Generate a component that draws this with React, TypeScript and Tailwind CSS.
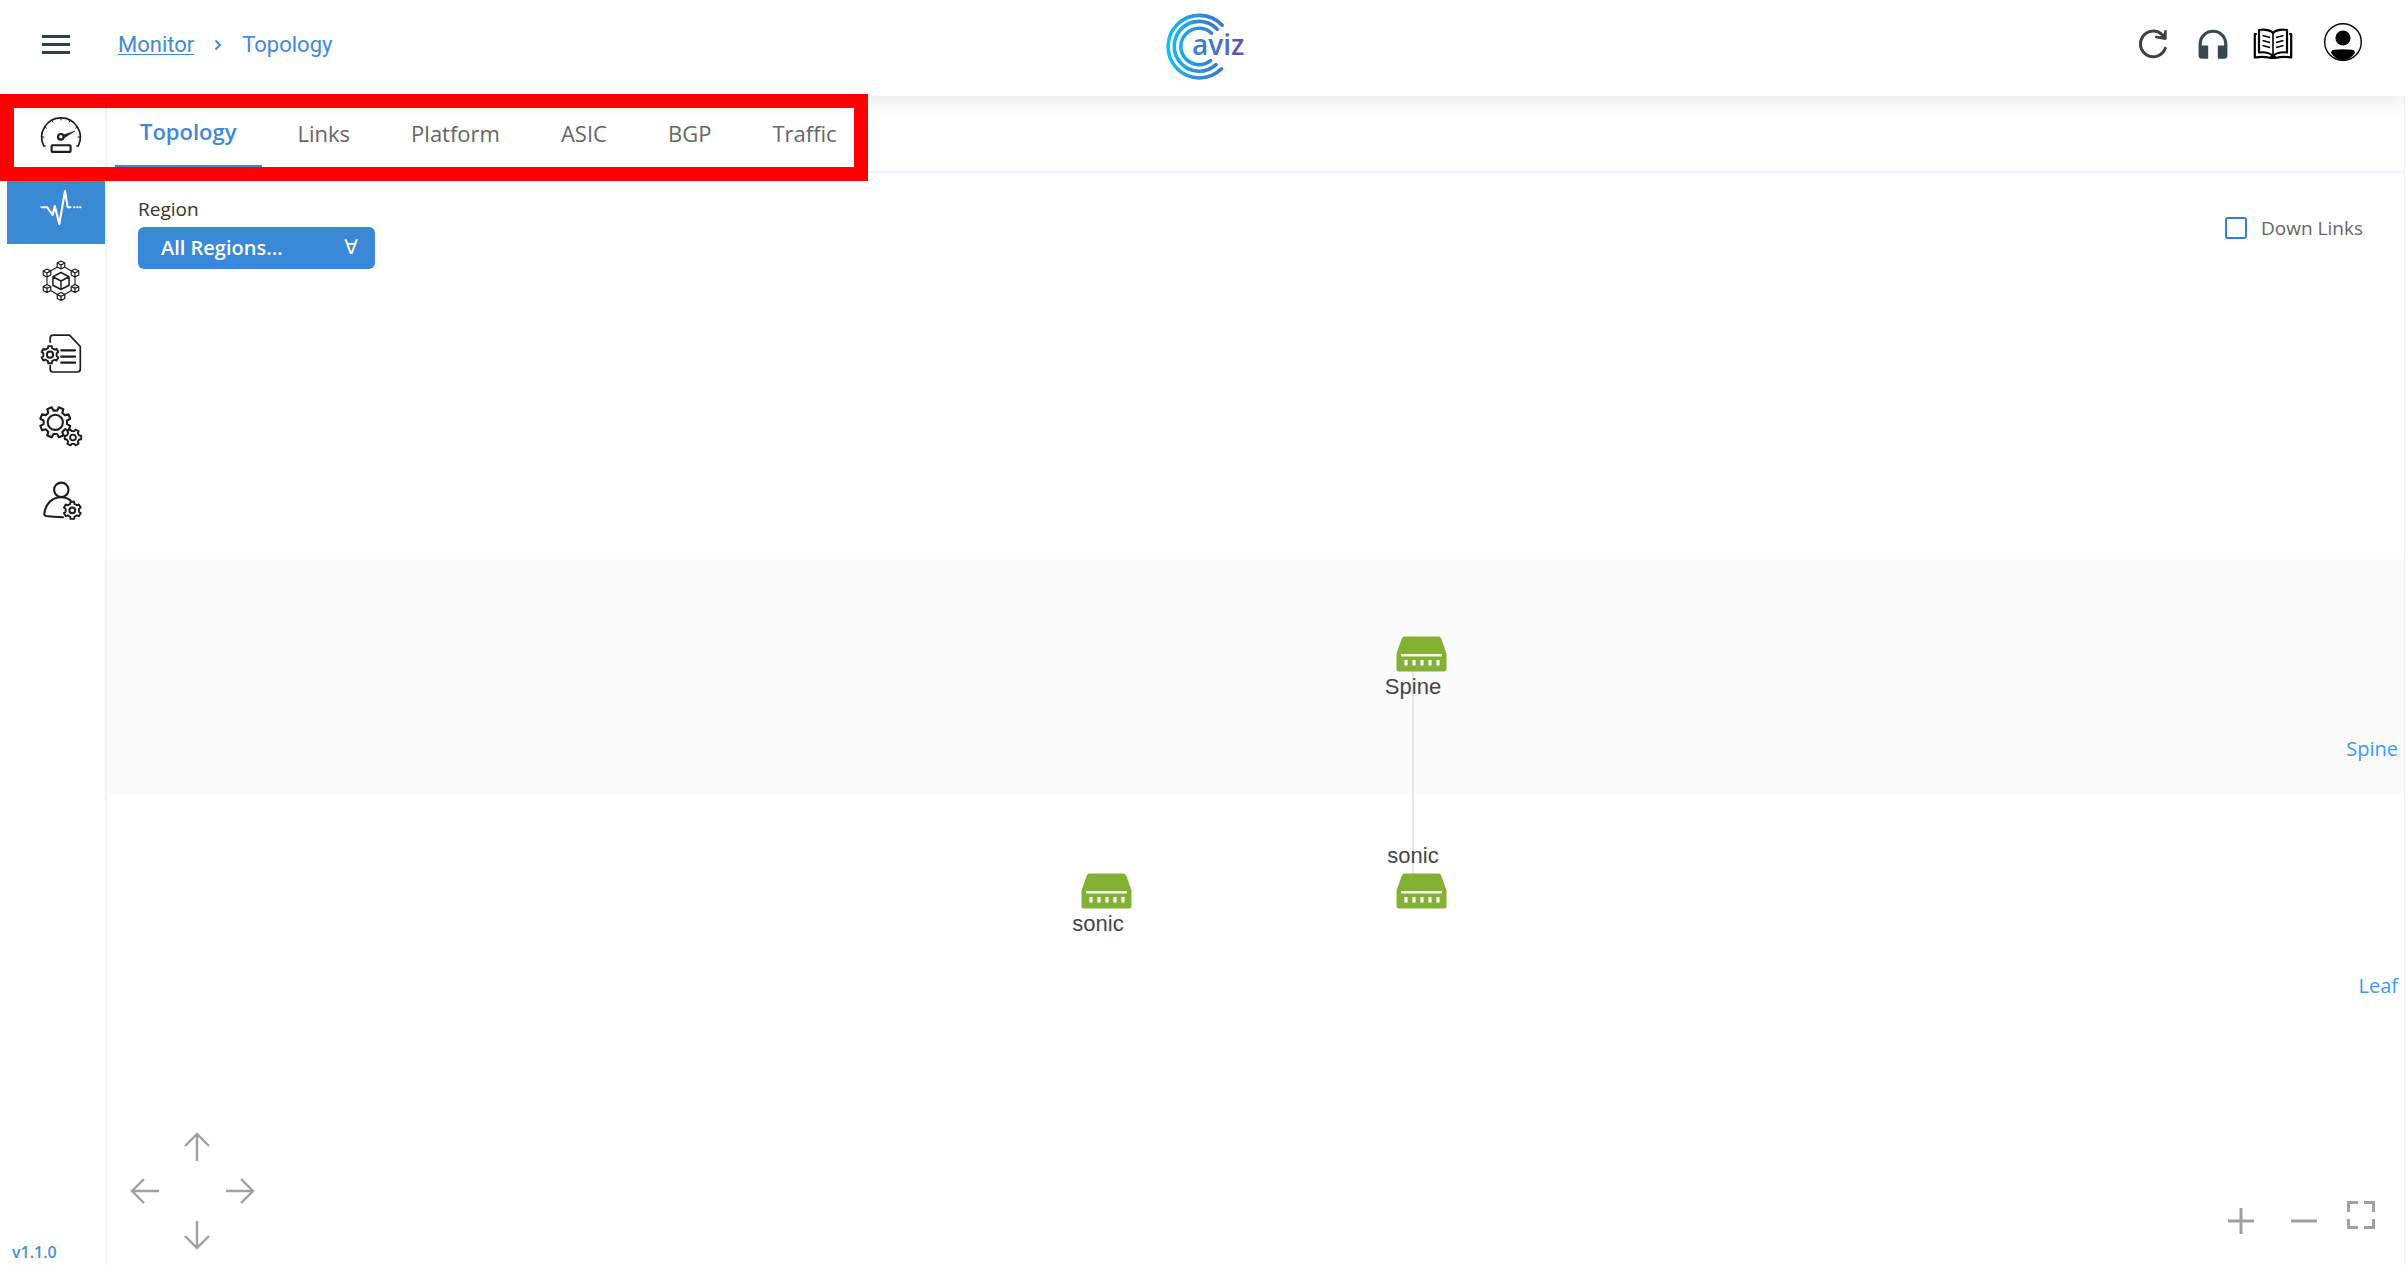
import { useState } from "react";
import { clsx } from "clsx";

const tabs = ["Topology", "Links", "Platform", "ASIC", "BGP", "Traffic"];

// Outline of a cog wheel around (cx, cy)
function gearPath(cx: number, cy: number, outer: number, teeth: number, phase = 0) {
  const inner = outer * 0.77;
  const step = (Math.PI * 2) / teeth;
  const points: string[] = [];
  for (let i = 0; i < teeth; i++) {
    const a = phase + i * step;
    [
      [-0.3, inner],
      [-0.2, outer],
      [0.2, outer],
      [0.3, inner],
    ].forEach(([offset, r]) => {
      const angle = a + offset * step;
      points.push(`${(cx + r * Math.cos(angle)).toFixed(2)} ${(cy + r * Math.sin(angle)).toFixed(2)}`);
    });
  }
  return `M${points.join("L")}Z`;
}

function cubePath(cx: number, cy: number, r: number) {
  const w = r * 0.95;
  const h = r * 0.5;
  return [
    `M${cx} ${cy - r}L${cx + w} ${cy - h}V${cy + h}L${cx} ${cy + r}L${cx - w} ${cy + h}V${cy - h}Z`,
    `M${cx - w} ${cy - h}L${cx} ${cy}L${cx + w} ${cy - h}M${cx} ${cy}V${cy + r}`,
  ].join("");
}

interface IconProps {
  children: React.ReactNode;
  size?: string;
}

function LineIcon({ children, size = "size-10" }: IconProps) {
  return (
    <svg
      viewBox="0 0 40 40"
      className={clsx(size, "overflow-visible")}
      fill="none"
      stroke="currentColor"
      strokeWidth="1.7"
      strokeLinejoin="round"
      strokeLinecap="round"
      aria-hidden="true"
    >
      {children}
    </svg>
  );
}

function GaugeIcon() {
  return (
    <LineIcon>
      <path d="M4 31H2.8A19.3 19.3 0 1 1 37.2 31H36" />
      <path d="M20 2.5V5M10.5 5L11.7 7M29.5 5L28.3 7M3.5 12L5.5 13.2M36.5 12L34.5 13.2M.8 22H3M39.2 22H37" strokeWidth="1" />
      <circle cx="19.8" cy="21.8" r="2.8" strokeWidth="2.2" />
      <path d="M22 20L34 16L23 23Z" fill="currentColor" strokeWidth=".5" />
      <rect x="10.6" y="30.3" width="19" height="6.6" rx="1" strokeWidth="2.1" />
    </LineIcon>
  );
}

function PulseIcon() {
  return (
    <LineIcon>
      <path
        d="M.5 19.3H6.2L11.7 27L13.8 18L18.3 36L24 3L26.7 19.3H29.5M33 19.3H33.4M36.2 19.3H36.6M39.2 19.3H39.6"
        strokeWidth="2.1"
      />
    </LineIcon>
  );
}

function ClusterIcon() {
  const outer = [
    [20, 4],
    [34, 12],
    [34, 27.5],
    [20, 35.5],
    [6, 27.5],
    [6, 12],
  ];
  return (
    <LineIcon>
      <path d={`M${outer.map((p) => p.join(" ")).join("L")}Z`} strokeWidth="1.1" />
      {outer.map(([x, y]) => (
        <path key={`${x}-${y}`} d={cubePath(x, y, 4)} fill="#fff" strokeWidth="1.2" />
      ))}
      <path d={cubePath(20, 20, 8.5)} fill="#fff" strokeWidth="1.5" />
    </LineIcon>
  );
}

function ConfigIcon() {
  return (
    <LineIcon>
      <path d="M9.2 8V4Q9.2 1.2 12 1.2H28.5L39.3 12.5V35Q39.3 38 36.3 38H12Q9.2 38 9.2 35V31.5" />
      <path d="M20.2 16.3H34M20.2 22.7H34M20.2 28.7H34" strokeWidth="2.3" />
      <path d={gearPath(9, 20.7, 8.8, 6, Math.PI / 6)} strokeWidth="1.9" />
      <circle cx="9" cy="20.7" r="3.1" strokeWidth="2" />
    </LineIcon>
  );
}

function SettingsIcon() {
  return (
    <LineIcon>
      <path d={gearPath(14.3, 15.3, 15.4, 8, Math.PI / 8)} strokeWidth="2.1" />
      <circle cx="14.3" cy="15.3" r="7.6" strokeWidth="2.1" />
      <path d={gearPath(32, 30.5, 8.4, 6)} fill="#fff" strokeWidth="1.9" />
      <circle cx="32" cy="30.5" r="2.9" strokeWidth="1.8" />
    </LineIcon>
  );
}

function UserSettingsIcon() {
  return (
    <LineIcon>
      <circle cx="20.3" cy="9.8" r="7.2" strokeWidth="2.1" />
      <path d="M22 37.3Q12 37 5 36Q3.2 35.6 3.3 33.5C4.5 24 11 17.2 20 17.2Q26 17.2 29.5 20.5" strokeWidth="2.1" />
      <path d={gearPath(31.3, 30.3, 8.8, 6, Math.PI / 6)} fill="#fff" strokeWidth="1.9" />
      <circle cx="31.3" cy="30.3" r="2.9" strokeWidth="2" />
    </LineIcon>
  );
}

const navItems = [
  { label: "Dashboard", icon: GaugeIcon },
  { label: "Monitor", icon: PulseIcon },
  { label: "Fabric", icon: ClusterIcon },
  { label: "Configure", icon: ConfigIcon },
  { label: "Settings", icon: SettingsIcon },
  { label: "Users", icon: UserSettingsIcon },
];

function Logo() {
  return (
    <svg viewBox="2 0 84 72" className="h-[72px] w-[84px]" role="img" aria-label="aviz">
      <defs>
        <linearGradient id="ring" gradientUnits="userSpaceOnUse" x1="7" y1="0" x2="64" y2="0">
          <stop offset="0" stopColor="#0fc3ee" />
          <stop offset=".5" stopColor="#2b95dc" />
          <stop offset="1" stopColor="#3f72c8" />
        </linearGradient>
        <linearGradient id="word" gradientUnits="userSpaceOnUse" x1="32" y1="0" x2="83" y2="0">
          <stop offset="0" stopColor="#3a86cf" />
          <stop offset=".6" stopColor="#4470c2" />
          <stop offset="1" stopColor="#6a4fb0" />
        </linearGradient>
      </defs>
      <g fill="none" stroke="url(#ring)" strokeWidth="3.6" strokeLinecap="round">
        <path d="M63.2 17.2A31.3 31.3 0 1 0 62.5 60.8" />
        <path d="M58.2 21.2A24.9 24.9 0 1 0 57 56.6" />
        <path d="M52.5 25.2A18.2 18.2 0 1 0 51.5 52.6" />
      </g>
      <text x="33" y="47" fill="url(#word)" className="font-['Open_Sans'] text-[28px] font-semibold">
        aviz
      </text>
    </svg>
  );
}

function Header() {
  return (
    <header className="relative z-10 grid h-24 grid-cols-[1fr_auto_1fr] items-center bg-white px-[42px] pb-2 shadow-[0_4px_18px_rgba(0,0,0,0.1)]">
      <div className="flex items-center font-[Roboto] text-[22px] leading-7 text-[#3f8ad8]">
        <button type="button" aria-label="Menu" className="flex w-7 flex-col gap-[5px] text-[#2f3e48]">
          <span className="h-[3px] w-full bg-current" />
          <span className="h-[3px] w-full bg-current" />
          <span className="h-[3px] w-full bg-current" />
        </button>
        <nav aria-label="Breadcrumb" className="ml-12 flex items-center gap-5 pt-0.5">
          <a href="#monitor" className="underline decoration-1 underline-offset-2">
            Monitor
          </a>
          <svg viewBox="0 0 8 12" className="h-3 w-2" fill="none" stroke="currentColor" strokeWidth="2" aria-hidden="true">
            <path d="M1.5 1.5L6 6L1.5 10.5" />
          </svg>
          <span>Topology</span>
        </nav>
      </div>
      <Logo />
      <div className="flex items-center justify-end gap-5">
        <button type="button" aria-label="Refresh" className="flex size-10 items-center justify-center text-[#404040]">
          <svg viewBox="0 0 30 30" className="size-[30px]" fill="none" stroke="currentColor" strokeWidth="3" strokeLinecap="round" aria-hidden="true">
            <path d="M27.3 19.3A12.8 12.8 0 1 1 23.6 5.2" />
            <path d="M27.4 2.2V9.6L18.2 8" strokeWidth="2.6" strokeLinejoin="round" />
            <path d="M27.2 3V9.5H20Z" fill="currentColor" stroke="none" />
          </svg>
        </button>
        <button type="button" aria-label="Support" className="flex size-10 items-center justify-center text-[#37474f]">
          <svg viewBox="0 0 30 30" className="size-[30px]" fill="currentColor" aria-hidden="true">
            <path d="M15 .7C6.9 .7 .6 7 .6 15v11.5a3.2 3.2 0 0 0 3.2 3.2h6.4V16.5H3.8V15a11.2 11.2 0 0 1 22.4 0v1.5h-6.4v13.2h6.4a3.2 3.2 0 0 0 3.2-3.2V15C29.4 7 23.1 .7 15 .7Z" />
          </svg>
        </button>
        <button type="button" aria-label="Documentation" className="flex size-10 items-center justify-center text-black">
          <svg viewBox="0 0 40 32" className="h-8 w-10" fill="none" stroke="currentColor" strokeLinejoin="round" aria-hidden="true">
            <path d="M20 4.8C16 1.8 11 1.3 6 2V24.5C11 23.8 16 24.5 20 27.8C24 24.5 29 23.8 34 24.5V2C29 1.3 24 1.8 20 4.8Z" strokeWidth="2.2" />
            <path d="M20 4.8V28" strokeWidth="1.6" />
            <path d="M3.8 6H1.8V29.5C7 28.5 12 28.5 17 29.8H23C28 28.5 33 28.5 38.2 29.5V6H36.2" strokeWidth="2.2" />
            <path d="M9.5 7.5L17 9.5M9.5 12.5L17 14.5M9.5 17.5L17 19.5M30.5 7.5L23 9.5M30.5 12.5L23 14.5M30.5 17.5L23 19.5" strokeWidth="1.7" />
            <path d="M17 28.2Q20 25.8 23 28.2Q22 31 20 31Q18 31 17 28.2Z" fill="currentColor" stroke="none" />
          </svg>
        </button>
        <button type="button" aria-label="Account" className="ml-2.5 flex size-10 items-center justify-center pb-1 text-black">
          <svg viewBox="0 0 38 38" className="size-[38px] shrink-0" fill="currentColor" aria-hidden="true">
            <circle cx="19" cy="19" r="18.3" fill="none" stroke="currentColor" strokeWidth="1.4" />
            <circle cx="19" cy="15" r="7.6" />
            <path d="M7 30Q7.3 26.7 10.5 26.7Q19 25.7 27.5 26.7Q30.7 26.7 31 30Q26 37 19 37.3Q12 37 7 30Z" />
          </svg>
        </button>
      </div>
    </header>
  );
}

function Sidebar() {
  return (
    <aside className="flex w-[107px] shrink-0 flex-col border-r-2 border-[#edf4fb] pt-0.5">
      <nav aria-label="Main" className="flex flex-col pl-[7px]">
        {navItems.map(({ label, icon: Icon }) => (
          <a
            key={label}
            href={`#${label.toLowerCase()}`}
            aria-label={label}
            className={clsx(
              "flex h-[73px] items-center justify-center pl-2.5",
              label === "Monitor" ? "bg-[#3a89d3] text-white" : "text-[#1c1c1c]"
            )}
          >
            <Icon />
          </a>
        ))}
      </nav>
      <p className="mt-auto pb-px pl-3 text-base leading-6 font-semibold text-[#4a8fd8]">v1.1.0</p>
    </aside>
  );
}

function SwitchIcon() {
  return (
    <svg viewBox="0 0 51 36" className="h-9 w-[51px] shrink-0" aria-hidden="true">
      <path d="M9 .5H42Q44.5 .5 45.3 2.8L50.5 17.5V33Q50.5 35.5 48 35.5H3Q.5 35.5 .5 33V17.5L5.7 2.8Q6.5 .5 9 .5Z" fill="#84b135" />
      <path d="M5 19.3H46" stroke="#f4f8ea" strokeWidth="2.4" />
      <path d="M10 24V29.5M18 24V29.5M26 24V29.5M34 24V29.5M42 24V29.5" stroke="#fff" strokeWidth="3.2" />
    </svg>
  );
}

interface DeviceNodeProps {
  name: string;
  position: string;
  labelOnTop?: boolean;
}

function DeviceNode({ name, position, labelOnTop }: DeviceNodeProps) {
  return (
    <div className={clsx("absolute flex w-[68px]", labelOnTop ? "flex-col-reverse gap-[3px]" : "flex-col gap-px", position)}>
      <div className="pl-[17px]">
        <SwitchIcon />
      </div>
      <span className="text-center font-['Liberation_Sans'] text-[22px] leading-7 text-[#454548]">{name}</span>
    </div>
  );
}

const arrowPaths = {
  up: "M15 29V2M3 14L15 2L27 14",
  left: "M29 15H2M14 3L2 15L14 27",
  right: "M1 15H28M16 3L28 15L16 27",
  down: "M15 1V28M3 16L15 28L27 16",
};

function PanButton({ direction, className }: { direction: keyof typeof arrowPaths; className: string }) {
  return (
    <button type="button" aria-label={`Pan ${direction}`} className={className}>
      <svg viewBox="0 0 30 30" className="size-[30px]" fill="none" stroke="currentColor" strokeWidth="2.4" aria-hidden="true">
        <path d={arrowPaths[direction]} />
      </svg>
    </button>
  );
}

function ZoomButton({ label, path }: { label: string; path: string }) {
  return (
    <button type="button" aria-label={label}>
      <svg viewBox="0 0 28 28" className="size-7" fill="none" stroke="currentColor" strokeWidth="3" aria-hidden="true">
        <path d={path} />
      </svg>
    </button>
  );
}

function TopologyCanvas() {
  const [downLinks, setDownLinks] = useState(false);

  return (
    <section className="relative flex flex-1 flex-col">
      <div className="flex h-[385px] items-start justify-between pt-[22px] pr-[41px] pl-[31px]">
        <div className="flex flex-col gap-1">
          <label htmlFor="region" className="text-[19px] leading-7 text-[#333]">
            Region
          </label>
          <div className="relative w-[237px]">
            <select
              id="region"
              className="h-[42px] w-full appearance-none rounded-md bg-[#3a88d8] pl-[23px] text-xl leading-7 font-semibold text-white"
            >
              <option>All Regions...</option>
            </select>
            <span className="pointer-events-none absolute top-1.5 right-[17px] font-['DejaVu_Sans'] text-xl leading-7 text-white">
              ∀
            </span>
          </div>
        </div>
        <label className="flex items-center gap-3.5 pt-[19px] text-[19px] leading-7 text-[#666]">
          <input
            type="checkbox"
            checked={downLinks}
            onChange={(e) => setDownLinks(e.target.checked)}
            className="size-[22px] appearance-none rounded-[3px] border-2 border-[#2f80d8] checked:bg-[#2f80d8]"
          />
          Down Links
        </label>
      </div>

      {/* Network layers */}
      <div className="flex h-[237px] items-end justify-end bg-[#fbfbfb] pr-1.5 pb-[30px] text-xl leading-8 text-[#3b99fc]">
        Spine
      </div>
      <div className="flex h-[237px] items-end justify-end pr-1.5 pb-[30px] text-xl leading-8 text-[#3b99fc]">
        Leaf
      </div>

      <div className="absolute top-[463px] left-[1305px] h-[240px] w-0.5 bg-[#e2eae6]" />
      <DeviceNode name="Spine" position="top-[463px] left-[1272px]" />
      <DeviceNode name="sonic" position="top-[669px] left-[1272px]" labelOnTop />
      <DeviceNode name="sonic" position="top-[700px] left-[957px]" />

      <div className="absolute bottom-[15px] left-[23px] grid grid-cols-[52px_43px_30px] gap-y-3.5 text-[#a0a0a0]">
        <PanButton direction="up" className="col-start-2 row-start-1" />
        <PanButton direction="left" className="col-start-1 row-start-2" />
        <PanButton direction="right" className="col-start-3 row-start-2" />
        <PanButton direction="down" className="col-start-2 row-start-3" />
      </div>
      <div className="absolute right-[29px] bottom-[30px] flex items-end text-[#a0a0a0]">
        <div className="flex gap-[35px] pr-[29px]">
          <ZoomButton label="Zoom in" path="M1 14H27M14 1V27" />
          <ZoomButton label="Zoom out" path="M1 14H27" />
        </div>
        <div className="flex pb-1.5">
          <ZoomButton label="Fit to screen" path="M1.5 11V1.5H11M17 1.5H26.5V11M26.5 18V26.5H17M11 26.5H1.5V18" />
        </div>
      </div>
    </section>
  );
}

export default function App() {
  const [activeTab, setActiveTab] = useState("Topology");

  return (
    <div className="relative flex min-h-screen flex-col bg-white font-['Open_Sans',sans-serif]">
      <Header />
      <div className="flex flex-1">
        <Sidebar />
        <main className="flex flex-1 flex-col border-r border-[#ededf0]">
          <div className="flex h-[77px] gap-[11px] border-b-2 border-[#edf3fa] pl-2">
            {tabs.map((tab) => (
              <button
                key={tab}
                type="button"
                onClick={() => setActiveTab(tab)}
                className={clsx(
                  "px-[25px] text-[22px] leading-7",
                  activeTab === tab
                    ? "border-b-[6px] border-[#3a88d8] font-semibold text-[#3f88d5]"
                    : "pb-0.5 text-[#666]"
                )}
              >
                {tab}
              </button>
            ))}
          </div>
          <TopologyCanvas />
        </main>
      </div>
      {/* Callout around the tab bar */}
      <div className="pointer-events-none absolute top-[94px] left-0 z-20 h-[87px] w-[868px] border-[14px] border-[#ff0000]" />
    </div>
  );
}
